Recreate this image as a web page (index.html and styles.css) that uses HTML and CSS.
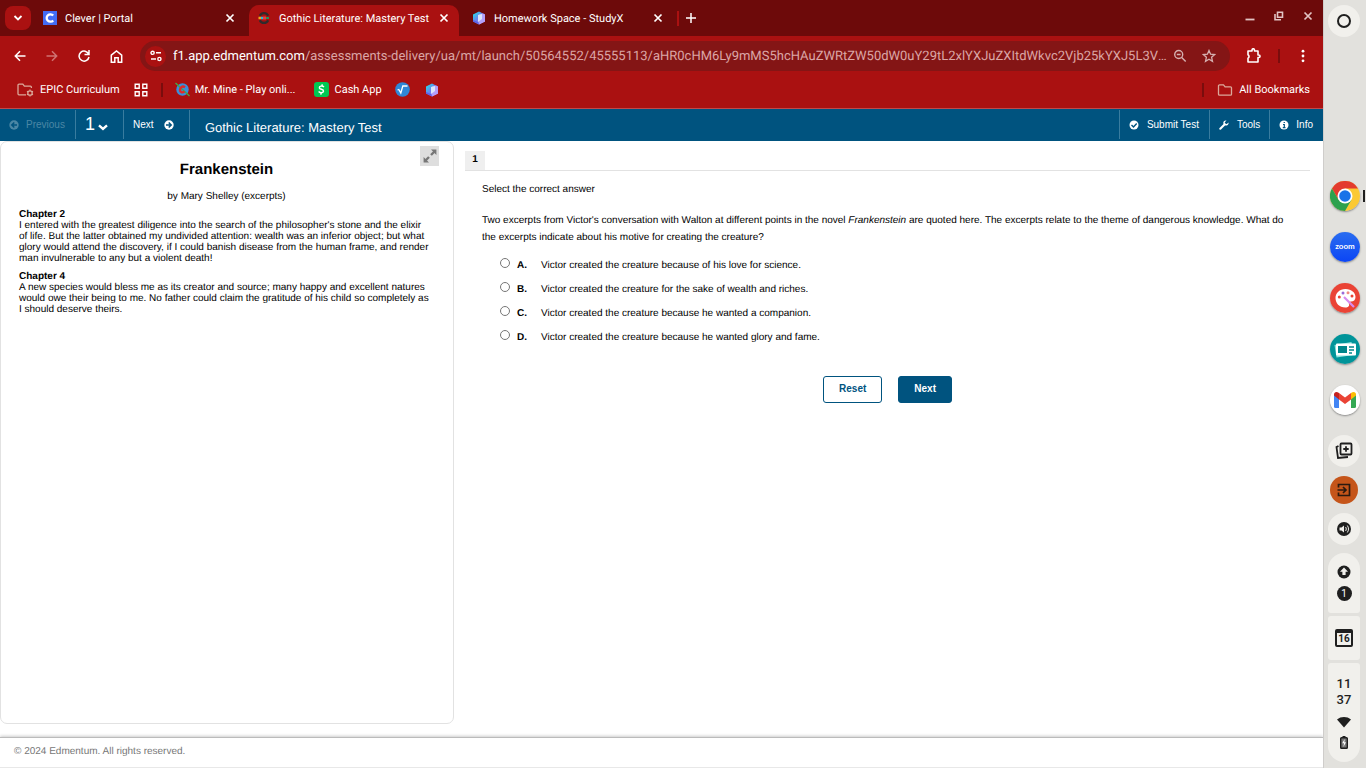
FILE: index.html
```html
<!DOCTYPE html>
<html lang="en">
<head>
<meta charset="utf-8">
<meta name="viewport" content="width=device-width, initial-scale=1">
<title>Gothic Literature: Mastery Test</title>
<link rel="stylesheet" href="styles.css">
</head>
<body>
<svg class="defs" width="0" height="0" aria-hidden="true">
  <defs>
    <linearGradient id="hexTop" x1="0" y1="0" x2="1" y2="1"><stop offset="0" stop-color="#19f0e6"/><stop offset=".5" stop-color="#6d7cf0"/><stop offset="1" stop-color="#e79af5"/></linearGradient>
    <linearGradient id="zoomBlue" x1="0" y1="0" x2="0" y2="1"><stop offset="0" stop-color="#2a6df0"/><stop offset="1" stop-color="#0b45f5"/></linearGradient>
    <symbol id="close" viewBox="0 0 10 10"><path d="M1.500 1.500l7 7M8.500 1.500l-7 7" fill="none" stroke="currentColor" stroke-width="1.700"/></symbol>
    <symbol id="hex" viewBox="0 0 14 14"><path d="M7 .5l6 3v7l-6 3-6-3v-7z" fill="url(#hexTop)"/><path d="M7 3.500l4-1 2 1v7l-6 3z" fill="#b3a0fa"/><path d="M6 4l4-1v5l-4 3z" fill="#dce6fb"/><path d="M1 9l5 2 1 2.500-6-3z" fill="#5a62e8"/></symbol>
    <symbol id="folder" viewBox="0 0 16 14"><path d="M2.500 1.800h4l1.600 2h5.400a1 1 0 0 1 1 1v6.400a1 1 0 0 1-1 1h-11a1 1 0 0 1-1-1V2.800a1 1 0 0 1 1-1z" fill="none" stroke="currentColor" stroke-width="1.300"/></symbol>
  </defs>
</svg>

<div class="browser">
  <header class="chrome">
    <div class="tabstrip">
      <button class="tab-search" aria-label="Search tabs"><svg width="10" height="8" viewBox="0 0 10 8"><path d="M1.500 2L5 5.500 8.500 2" fill="none" stroke="currentColor" stroke-width="1.800"/></svg></button>
      <div class="tab">
        <svg width="14" height="14" viewBox="0 0 14 14"><rect width="14" height="14" fill="#436cf5"/><path d="M10.200 4.600A3.700 3.700 0 1 0 10.200 9.400" fill="none" stroke="#fff" stroke-width="2.300"/></svg>
        <span class="tab-title">Clever | Portal</span>
        <button class="tab-close" aria-label="Close Clever"><svg width="10" height="10"><use href="#close"/></svg></button>
      </div>
      <div class="tab tab-active">
        <svg width="14" height="14" viewBox="0 0 14 14"><path d="M2.800 4.800A4.600 4.600 0 0 1 11.200 4.800M2.800 9.200A4.600 4.600 0 0 0 11.200 9.200" fill="none" stroke="#302a2c" stroke-width="2.200"/><path d="M1.500 7H4" stroke="#f2a916" stroke-width="2.400"/><path d="M4 7h2" stroke="#21b8e8" stroke-width="2.400"/><path d="M6 7h3" stroke="#e83e3f" stroke-width="3"/><path d="M9 7h3" stroke="#28925b" stroke-width="2"/></svg>
        <span class="tab-title">Gothic Literature: Mastery Test</span>
        <button class="tab-close" aria-label="Close Gothic Literature"><svg width="10" height="10"><use href="#close"/></svg></button>
      </div>
      <div class="tab">
        <svg width="14" height="14"><use href="#hex"/></svg>
        <span class="tab-title">Homework Space - StudyX</span>
        <button class="tab-close" aria-label="Close StudyX"><svg width="10" height="10"><use href="#close"/></svg></button>
      </div>
      <button class="new-tab" aria-label="New tab"><svg width="10" height="10" viewBox="0 0 10 10"><path d="M5 0v10M0 5h10" stroke="currentColor" stroke-width="1.500"/></svg></button>
      <div class="window-buttons">
        <button aria-label="Minimize"><svg width="10" height="10" viewBox="0 0 10 10"><path d="M.5 8.500h9" stroke="currentColor" stroke-width="1.800"/></svg></button>
        <button aria-label="Restore"><svg width="10" height="10" viewBox="0 0 10 10"><path d="M3.500 1.200h5v5h-5zM1 3v5.800h6" fill="none" stroke="currentColor" stroke-width="1.600"/></svg></button>
        <button aria-label="Close window"><svg width="10" height="10"><use href="#close"/></svg></button>
      </div>
    </div>

    <div class="toolbar">
      <button aria-label="Back"><svg width="12" height="12" viewBox="0 0 12 12"><path d="M11.500 6H1.500M6 1.200L1.300 6 6 10.800" fill="none" stroke="currentColor" stroke-width="1.500"/></svg></button>
      <button aria-label="Forward" class="dim"><svg width="12" height="12" viewBox="0 0 12 12"><path d="M.5 6h10M6 1.200L10.700 6 6 10.800" fill="none" stroke="currentColor" stroke-width="1.500"/></svg></button>
      <button aria-label="Reload"><svg width="12" height="12" viewBox="0 0 12 12"><path d="M10.700 4.200A5 5 0 1 0 11 7M11 0v4.500H6.500" fill="none" stroke="currentColor" stroke-width="1.500"/></svg></button>
      <button aria-label="Home"><svg width="13" height="13" viewBox="0 0 12 13"><path d="M.8 5.200L6 1l5.200 4.200v7H7.700V7.800H4.300v4.400H.8z" fill="none" stroke="currentColor" stroke-width="1.500"/></svg></button>
      <div class="omnibox">
        <button class="site-info" aria-label="Site information"><svg width="12" height="12" viewBox="0 0 12 12" fill="none" stroke="currentColor" stroke-width="1.400"><circle cx="2.600" cy="2.800" r="1.600"/><path d="M6 2.800h5M1 9h5"/><circle cx="9.400" cy="9" r="1.600"/></svg></button>
        <div class="url" role="textbox" aria-label="Address" tabindex="0"><span class="host">f1.app.edmentum.com</span>/assessments-delivery/ua/mt/launch/50564552/45555113/aHR0cHM6Ly9mMS5hcHAuZWRtZW50dW0uY29tL2xlYXJuZXItdWkvc2Vjb25kYXJ5L3VzZ...</div>
        <button aria-label="Zoom"><svg width="14" height="14" viewBox="0 0 14 14" fill="none" stroke="currentColor" stroke-width="1.400"><circle cx="5.700" cy="5.500" r="4"/><path d="M3.800 5.500h3.800M8.700 8.500l4 4"/></svg></button>
        <button aria-label="Bookmark"><svg width="14" height="14" viewBox="0 0 14 14"><path d="M7 1.500l1.600 3.700 4 .4-3 2.700.9 4L7 10.200l-3.500 2.100.9-4-3-2.700 4-.4z" fill="none" stroke="currentColor" stroke-width="1.300"/></svg></button>
      </div>
      <button class="ext" aria-label="Extensions"><svg width="16" height="16" viewBox="0 0 16 16"><path d="M2 3h4V2a1.200 1.200 0 0 1 2.500 0v1H12v4h.8a1.200 1.200 0 0 1 0 2.500H12V14H2v-3.800a2 2 0 0 0 0-3.500z" fill="none" stroke="currentColor" stroke-width="1.600" stroke-linejoin="round"/></svg></button>
      <span class="divider"></span>
      <button class="menu" aria-label="Menu"><svg width="4" height="14" viewBox="0 0 4 14" fill="currentColor"><circle cx="2" cy="2.200" r="1.400"/><circle cx="2" cy="7" r="1.400"/><circle cx="2" cy="11.800" r="1.400"/></svg></button>
    </div>

    <nav class="bookmarks" aria-label="Bookmarks">
      <a class="epic" href="#"><svg class="tan" width="17" height="15" viewBox="0 0 17 15" fill="none" stroke="currentColor" stroke-width="1.300"><path d="M9 12.800H2a1 1 0 0 1-1-1V3.200a1 1 0 0 1 1-1h3.800l1.600 2h6a1 1 0 0 1 1 1V6"/><circle cx="13" cy="11" r="2.200"/><path d="M13 7.500v1.300M13 13.200v1.300M10 9.300l1.100.6M14.900 12.100l1.100.6M10 12.700l1.100-.6M14.900 9.900l1.100-.6"/></svg>EPIC Curriculum</a>
      <a class="apps" href="#" aria-label="Apps"><svg width="14" height="14" viewBox="0 0 14 14" fill="none" stroke="currentColor" stroke-width="1.400"><path d="M1.200 1.200h4v4h-4zM8.800 1.200h4v4h-4zM1.200 8.800h4v4h-4zM8.800 8.800h4v4h-4z"/></svg></a>
      <span class="divider"></span>
      <a class="mine" href="#"><svg width="15" height="15" viewBox="0 0 15 15"><circle cx="7.500" cy="7.500" r="6.200" fill="#3a8fdb"/><path d="M.5 1l14 13" stroke="#43aa45" stroke-width="1.300"/><path d="M10 5.200C7.500 3.500 5 5.500 5 8s2.500 3 4.500 1.500" fill="none" stroke="#e12a2a" stroke-width="2.400"/></svg>Mr. Mine - Play onli...</a>
      <a class="cash" href="#"><svg width="15" height="15" viewBox="0 0 15 15"><rect width="15" height="15" rx="3" fill="#00c853"/><path d="M10 5C8 3.300 5.200 4.100 5.400 5.800 5.600 7.700 9.700 7 9.500 9.200 9.300 11.200 6 11.100 4.600 9.600M8.300 2.300l-.4 1.700M7.200 10.800l-.4 1.900" fill="none" stroke="#fff" stroke-width="1.500"/></svg>Cash App</a>
      <a class="root" href="#" aria-label="Calculator"><svg width="15" height="15" viewBox="0 0 15 15"><circle cx="7.500" cy="7.500" r="7.300" fill="#2f87d6"/><path d="M2.500 8l1.300-.5L5.800 11l2-7h4.700" fill="none" stroke="#fff" stroke-width="1.300"/></svg></a>
      <a href="#" aria-label="StudyX"><svg width="14" height="14"><use href="#hex"/></svg></a>
      <span class="divider far"></span>
      <a class="all" href="#"><svg class="tan" width="16" height="14"><use href="#folder"/></svg>All Bookmarks</a>
    </nav>
  </header>

  <div class="appbar">
    <button class="prev" disabled><svg width="10" height="10" viewBox="0 0 10 10"><circle cx="5" cy="5" r="4.700" fill="currentColor"/><path d="M8 5H3M5.300 2.500L2.800 5l2.500 2.500" fill="none" stroke="#00537f" stroke-width="1.500"/></svg>Previous</button>
    <button class="number">1<svg width="10" height="7" viewBox="0 0 10 7"><path d="M1 1.300l4 3.500 4-3.500" fill="none" stroke="currentColor" stroke-width="2.400"/></svg></button>
    <button class="next">Next<svg width="10" height="10" viewBox="0 0 10 10"><circle cx="5" cy="5" r="4.700" fill="currentColor"/><path d="M2 5h5M4.700 2.500L7.200 5 4.700 7.500" fill="none" stroke="#00537f" stroke-width="1.500"/></svg></button>
    <h1>Gothic Literature: Mastery Test</h1>
    <button class="finish"><svg width="10" height="10" viewBox="0 0 10 10"><circle cx="5" cy="5" r="4.500" fill="#fff"/><path d="M2.500 5l2 2 3.200-3.500" fill="none" stroke="#00537f" stroke-width="1.400"/></svg>Submit Test</button>
    <button class="tools"><svg width="10" height="10" viewBox="0 0 10 10"><path d="M1.300 8.700l4.500-4.500" stroke="#fff" stroke-width="2" stroke-linecap="round"/><path d="M9.500 2.500L7.800 4 6 3.800 5.800 2.200 7.500.5C5.800 0 4.200 1.200 4.300 3c.1 2 2.300 3.200 4 2.200 1-.6 1.500-1.600 1.200-2.700z" fill="#fff"/></svg>Tools</button>
    <button class="info"><svg width="10" height="10" viewBox="0 0 10 10"><circle cx="5" cy="5" r="4.500" fill="#fff"/><path d="M4 4.500h1.300v3M3.800 7.700h2.700M4.600 2.500h1.300" fill="none" stroke="#00537f" stroke-width="1.200"/></svg>Info</button>
  </div>

  <main class="content">
    <section class="passage">
      <button class="expand" aria-label="Expand"><svg width="14" height="14" viewBox="0 0 14 14" fill="#777" stroke="#777"><path d="M2.500 11.500L6 8M8 6l3.500-3.500" stroke-width="2.400"/><path d="M8 .6h5.400V6zM.6 8v5.400H6z" stroke="none"/></svg></button>
      <h2>Frankenstein</h2>
      <p class="byline">by Mary Shelley (excerpts)</p>
      <h3>Chapter 2</h3>
      <p class="excerpt">I entered with the greatest diligence into the search of the philosopher's stone and the elixir of life. But the latter obtained my undivided attention: wealth was an inferior object; but what glory would attend the discovery, if I could banish disease from the human frame, and render man invulnerable to any but a violent death!</p>
      <h3>Chapter 4</h3>
      <p class="excerpt">A new species would bless me as its creator and source; many happy and excellent natures would owe their being to me. No father could claim the gratitude of his child so completely as I should deserve theirs.</p>
    </section>

    <form class="question">
      <div class="question-head"><span class="badge">1</span></div>
      <div class="question-body">
        <p class="instruction">Select the correct answer</p>
        <p class="prompt">Two excerpts from Victor's conversation with Walton at different points in the novel <em>Frankenstein</em> are quoted here. The excerpts relate to the theme of dangerous knowledge. What do the excerpts indicate about his motive for creating the creature?</p>
        <div class="choices">
          <label><input type="radio" name="answer"><b>A.</b><span>Victor created the creature because of his love for science.</span></label>
          <label><input type="radio" name="answer"><b>B.</b><span>Victor created the creature for the sake of wealth and riches.</span></label>
          <label><input type="radio" name="answer"><b>C.</b><span>Victor created the creature because he wanted a companion.</span></label>
          <label><input type="radio" name="answer"><b>D.</b><span>Victor created the creature because he wanted glory and fame.</span></label>
        </div>
      </div>
      <div class="actions">
        <button type="reset" class="reset">Reset</button>
        <button type="button" class="submit">Next</button>
      </div>
    </form>
  </main>

  <footer class="footer">© 2024 Edmentum. All rights reserved.</footer>
</div>

<aside class="shelf" aria-label="Shelf">
  <button class="bubble" aria-label="Launcher"><svg width="16" height="16" viewBox="0 0 16 16"><circle cx="8" cy="8" r="6" fill="none" stroke="#1f1f1f" stroke-width="2"/></svg></button>
  <div class="pinned">
    <button class="running" aria-label="Chrome"><svg width="30" height="30" viewBox="0 0 30 30"><circle cx="15" cy="15" r="15" fill="#fbc934"/><path d="M2 7.500A15 15 0 0 1 28 7.500H15L8.500 18.700z" fill="#e33b2e"/><path d="M2 7.500A15 15 0 0 0 15 30l6.500-11.200h-13z" fill="#2da14e"/><circle cx="15" cy="15" r="7.500" fill="#fff"/><circle cx="15" cy="15" r="5.800" fill="#1a73e8"/></svg></button>
    <button aria-label="Zoom"><svg width="30" height="30" viewBox="0 0 30 30"><circle cx="15" cy="15" r="15" fill="url(#zoomBlue)"/><text x="15" y="17" text-anchor="middle" class="zoom-word">zoom</text></svg></button>
    <button aria-label="Canvas"><svg width="30" height="30" viewBox="0 0 30 30"><circle cx="15" cy="15" r="15" fill="#ea4335"/><path d="M15.500 6c6 0 10 3.700 10 8 0 3-2 4.500-4.500 4.500-2 0-2.500 1-2 2.500.7 2-1 3.500-3.500 3.500C9 24.500 5.500 20 5.500 15S9.500 6 15.500 6z" fill="#fff"/><circle cx="9.300" cy="14" r="1.500" fill="#ea4335"/><circle cx="13" cy="10" r="1.500" fill="#9b6ad8"/><circle cx="18" cy="9.700" r="1.500" fill="#f28b82"/><circle cx="22" cy="13" r="1.500" fill="#ea4335"/><path d="M14 14l10 10" stroke="#d88bef" stroke-width="2.200"/></svg></button>
    <button aria-label="Screencast"><svg width="30" height="30" viewBox="0 0 30 30"><circle cx="15" cy="15" r="15" fill="#009499"/><path d="M4.500 11l17-3 2 13-17 2.500z" fill="#8be2de"/><rect x="6" y="9.500" width="20" height="12" rx="1" fill="#fff"/><path d="M8 12h9v7H8z" fill="#00868b"/><path d="M19 13h5M19 16h5M19 19h3" stroke="#00868b" stroke-width="1.300"/></svg></button>
    <button aria-label="Gmail"><svg width="30" height="30" viewBox="0 0 30 30"><circle cx="15" cy="15" r="15" fill="#fff"/><path d="M4 9.500l5 3.500v10H5.500A1.500 1.500 0 0 1 4 21.500z" fill="#4285f4"/><path d="M26 9.500L21 13v10h3.500a1.500 1.500 0 0 0 1.500-1.500z" fill="#34a853"/><path d="M9 8l6 4.500L21 8v6.500L15 19l-6-4.500z" fill="#ea4335"/><path d="M4 9.500C4 7 6.500 6 9 8v6.500l-5-4z" fill="#c5221f"/><path d="M26 9.500C26 7 23.500 6 21 8v6.500l5-4z" fill="#fbbc04"/></svg></button>
  </div>
  <div class="tray">
    <button class="bubble" aria-label="Tote"><svg width="18" height="18" viewBox="0 0 18 18" fill="none" stroke="#1f1f1f" stroke-width="1.800"><rect x="5.500" y="1.500" width="11" height="11" rx="1"/><path d="M11 4.300v5.400M8.300 7h5.400M3.500 4L1.500 5l1.500 11 10-1"/></svg></button>
    <button class="signout" aria-label="Sign out"><svg width="14" height="14" viewBox="0 0 14 14" fill="none" stroke="#2b1a10" stroke-width="1.700"><path d="M1.500 4.500v-3h11v11h-11v-3M.5 7h8M6 4l3 3-3 3"/></svg></button>
    <button class="bubble" aria-label="Select to speak"><svg width="16" height="16" viewBox="0 0 16 16"><circle cx="8" cy="8" r="7" fill="#1f1f1f"/><path d="M3.500 6.500h2L8 4.500v7L5.500 9.500h-2z" fill="#f1f0ec"/><path d="M9.500 6c1 1 1 3 0 4M11.300 4.500c1.600 2 1.600 5 0 7" fill="none" stroke="#f1f0ec" stroke-width="1"/></svg></button>
    <div class="status">
      <button class="pill pill-top" aria-label="Notifications"><svg width="14" height="14" viewBox="0 0 14 14"><circle cx="7" cy="7" r="6.500" fill="#1f1f1f"/><path d="M7 2.500L3 6.700h2.400V10h3.200V6.700H11z" fill="#f1f0ec"/></svg><span class="count">1</span></button>
      <button class="pill" aria-label="Calendar"><span class="date">16</span></button>
      <button class="pill pill-bottom" aria-label="Quick settings"><span class="clock">11<br>37</span><svg width="14" height="12" viewBox="0 0 14 12"><path d="M0 3.500C4 .2 10 .2 14 3.500L7 11.500z" fill="#1f1f1f"/></svg><svg width="8" height="13" viewBox="0 0 8 13"><rect x="2.500" width="3" height="2" fill="#1f1f1f"/><rect x=".7" y="1.700" width="6.600" height="10.600" rx=".8" fill="#777" stroke="#1f1f1f" stroke-width="1.400"/><path d="M4.700 3L2.200 7.200H4L3.400 11 6 6.300H4.300z" fill="#fff"/></svg></button>
    </div>
  </div>
</aside>
</body>
</html>
```

FILE: styles.css
```css
* { box-sizing: border-box; }

body {
  margin: 0;
  display: flex;
  min-height: 100vh;
  background: #fff;
  color: #000;
  font: 10px/11px "Liberation Sans", Arial, sans-serif;
  text-rendering: geometricPrecision;
}

h1, h2, h3, p { margin: 0; }

button {
  display: inline-flex;
  align-items: center;
  justify-content: center;
  padding: 0;
  border: 0;
  background: none;
  color: inherit;
  font: inherit;
}

svg { flex: none; display: block; }
.defs { position: absolute; }

.browser {
  flex: 1;
  min-width: 0;
  display: flex;
  flex-direction: column;
}

/* Browser frame */
.chrome {
  background: #aa1111;
  border-bottom: 1px solid #c04a4a;
  color: #fff;
  font: 11px/16px Roboto, sans-serif;
}

.tabstrip {
  display: flex;
  align-items: center;
  height: 36px;
  padding-left: 5px;
  background: #6d0a0a;
}

.tab-search {
  width: 26px;
  height: 24px;
  border-radius: 8px;
  background: #aa1111;
}

.tab {
  display: flex;
  align-items: center;
  width: 218px;
  height: 31px;
  margin-top: 5px;
  padding: 0 14px 5px 12px;
  gap: 8px;
}

.tab-active {
  width: 210px;
  padding: 0 10px 5px 8px;
  border-radius: 10px 10px 0 0;
  background: #aa1111;
}

.tab-title { flex: 1; padding-top: 1px; white-space: nowrap; }
.tab-active + .tab { width: 218px; padding-left: 13px; }

.new-tab {
  width: 26px;
  height: 15px;
  border-left: 2px solid #aa1111;
}

.window-buttons {
  display: flex;
  gap: 19px;
  margin-left: auto;
  padding: 0 10px 5px 0;
  color: #e2c4c4;
}

.toolbar {
  display: flex;
  align-items: center;
  height: 41px;
  padding: 0 18px 1px 14px;
  gap: 20px;
}

.dim { color: #cf7373; }

.omnibox {
  flex: 1;
  min-width: 0;
  display: flex;
  align-items: center;
  height: 30px;
  margin-left: -3px;
  padding: 0 14px 0 5px;
  border-radius: 15px;
  background: #841515;
  color: #d5b0b0;
}

.omnibox button + button { margin-left: 15px; }

.site-info {
  width: 21px;
  height: 21px;
  border-radius: 50%;
  background: #aa1111;
  color: #fff;
}

.url {
  flex: 1;
  overflow: hidden;
  margin: 0 4px 0 7px;
  padding-top: 2px;
  font-size: 13px;
  line-height: 20px;
  white-space: nowrap;
  text-overflow: ellipsis;
  color: #dba6a6;
}

.host { color: #fff; }
.ext { margin-left: -4px; }

.divider {
  width: 2px;
  height: 14px;
  background: #7a0d0d;
}

.toolbar .divider { margin: 0 1px 0 -4px; }

.bookmarks {
  display: flex;
  align-items: center;
  height: 31px;
  padding: 0 13px 6px 17px;
}

.bookmarks a {
  display: flex;
  align-items: center;
  gap: 6px;
  color: #fff;
  text-decoration: none;
  white-space: nowrap;
}

.tan { color: #dba89a; }
.apps { margin: 0 13px 0 14px; }
.bookmarks .mine { margin: 0 19px 0 12px; gap: 5px; }
.bookmarks .cash { gap: 5px; }
.root { margin: 0 15px 0 13px; }
.far { margin-left: auto; }
.all { margin-left: 13px; }

/* Assessment navigation */
.appbar {
  display: flex;
  height: 32px;
  padding: 1px 0 2px;
  background: #00537f;
  color: #fff;
}

.appbar button {
  gap: 8px;
  padding: 0 9px;
  border-left: 1px solid #397c9f;
}

.appbar .prev { gap: 7px; padding: 0 10px 0 9px; border: 0; color: #4b87a5; }
.appbar .number { justify-content: flex-start; gap: 3px; width: 48px; font-size: 18px; }
.number svg { margin-top: 6px; }
.appbar .next { justify-content: flex-start; gap: 11px; width: 66px; }
.appbar .finish, .appbar .info { padding-right: 10px; }
.appbar .info { gap: 7px; }

.appbar h1 {
  flex: 1;
  padding: 10px 0 0 15px;
  border-left: 1px solid #397c9f;
  font-size: 13px;
  font-weight: normal;
  line-height: 15px;
}

/* Passage and question */
.content {
  flex: 1;
  display: grid;
  grid-template-columns: minmax(0, 454fr) minmax(0, 869fr);
}

.passage {
  position: relative;
  margin-bottom: 13px;
  padding: 20px 19px 20px 18px;
  border: 1px solid #e2e2e2;
  border-radius: 7px;
}

.expand {
  position: absolute;
  top: 4px;
  right: 14px;
  width: 19px;
  height: 20px;
  background: #dedede;
}

.passage h2 {
  margin-bottom: 13px;
  font-size: 15px;
  line-height: 16px;
  text-align: center;
}

.byline { margin-bottom: 7px; text-align: center; }
.passage h3 { font-size: 10px; line-height: 11px; }
.passage h3 ~ h3 { margin-top: 7px; }
.excerpt { padding-right: 3px; }

.question { padding: 10px 13px 20px 11px; }

.question-head {
  display: flex;
  border-bottom: 1px solid #e2e2e2;
}

.badge {
  width: 20px;
  height: 19px;
  background: #efefef;
  font-weight: bold;
  line-height: 18px;
  text-align: center;
}

.question-body { padding: 10px 17px 0; line-height: 17px; }
.prompt { margin-top: 14px; }

.choices {
  display: flex;
  flex-direction: column;
  gap: 7px;
  margin-top: 11px;
  padding-left: 18px;
}

.choices label { display: flex; }

.choices input {
  width: 10px;
  height: 10px;
  margin: 1px 7px 0 0;
}

.choices b { width: 24px; }

.actions {
  display: flex;
  justify-content: center;
  gap: 16px;
  margin-top: 30px;
}

.actions button {
  height: 27px;
  padding: 0 15px 3px;
  border: 1px solid #00537f;
  border-radius: 3px;
  font-weight: bold;
}

.reset { color: #00537f; }
.submit { background: #00537f; color: #fff; }

.footer {
  height: 31px;
  padding: 8px 14px;
  border-top: 1px solid #bbb;
  border-bottom: 1px solid #e8e8e8;
  box-shadow: 0 -1px 3px #ccc;
  color: #777;
}

/* System shelf */
.shelf {
  flex: 0 0 43px;
  display: flex;
  flex-direction: column;
  align-items: center;
  padding: 5px 2px 6px 0;
  border-left: 1px solid #cfcdcb;
  background: #e2e1dd;
  color: #1f1f1f;
  font-family: Roboto, sans-serif;
}

.bubble {
  width: 32px;
  height: 32px;
  border-radius: 50%;
  background: #f1f0ec;
}

.pinned {
  display: flex;
  flex-direction: column;
  gap: 21px;
  margin: auto 0 20px 2px;
}

.pinned button { border-radius: 50%; box-shadow: 0 1px 2px #888; }
.running { position: relative; }

.running::after {
  content: "";
  position: absolute;
  top: 9px;
  left: 33px;
  width: 2px;
  height: 12px;
  background: #1f1f1f;
}

.zoom-word {
  fill: #fff;
  font: bold 8px Lato, sans-serif;
}

.tray {
  display: flex;
  flex-direction: column;
  align-items: center;
  gap: 9px;
}

.signout {
  width: 28px;
  height: 28px;
  border-radius: 50%;
  background: #c5551a;
}

.status {
  display: flex;
  flex-direction: column;
  gap: 3px;
  margin-top: -1px;
}

.pill {
  flex-direction: column;
  gap: 7px;
  width: 32px;
  padding: 13px 0;
  border-radius: 3px;
  background: #f1f0ec;
}

.pill-top { padding: 12px 0; border-radius: 16px 16px 3px 3px; }
.pill-bottom { gap: 8px; padding: 13px 0; border-radius: 3px 3px 16px 16px; }

.count {
  width: 15px;
  height: 15px;
  border-radius: 50%;
  background: #1f1f1f;
  color: #fff;
  line-height: 15px;
}

.date {
  width: 18px;
  height: 18px;
  border: 2px solid #1f1f1f;
  border-top-width: 4px;
  border-radius: 2px;
  font-weight: bold;
  line-height: 12px;
}

.clock { font-size: 13px; font-weight: 500; line-height: 16px; }
```
